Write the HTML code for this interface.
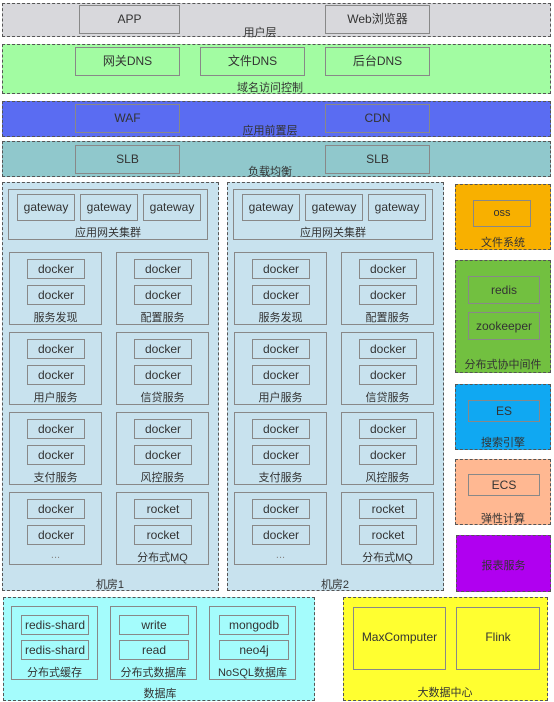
<!DOCTYPE html>
<html><head><meta charset="utf-8"><style>
body{margin:0;width:554px;height:702px;background:#fff;position:relative;overflow:hidden;font-family:"Liberation Sans","Noto Sans CJK SC",sans-serif;color:#333}
div{position:absolute;box-sizing:border-box}
.L{border:1px dashed #555}
.b{border:1px solid #888;text-align:center;font-size:12px}
.t{font-size:11px;text-align:center;white-space:nowrap}
</style></head><body>
<!-- user layer -->
<div class="L" style="left:2px;top:3px;width:549px;height:34px;background:#d8d8dc"></div>
<div class="b" style="left:79px;top:5px;width:101px;height:29px;line-height:27px">APP</div>
<div class="b" style="left:325px;top:5px;width:105px;height:29px;line-height:27px">Web浏览器</div>
<div class="t" style="left:230px;top:24px;width:60px">用户层</div>
<!-- DNS -->
<div class="L" style="left:2px;top:44px;width:549px;height:50px;background:#a2fca2"></div>
<div class="b" style="left:75px;top:47px;width:105px;height:29px;line-height:27px">网关DNS</div>
<div class="b" style="left:200px;top:47px;width:105px;height:29px;line-height:27px">文件DNS</div>
<div class="b" style="left:325px;top:47px;width:105px;height:29px;line-height:27px">后台DNS</div>
<div class="t" style="left:220px;top:79px;width:100px">域名访问控制</div>
<!-- front -->
<div class="L" style="left:2px;top:101px;width:549px;height:36px;background:#5a6cf2"></div>
<div class="b" style="left:75px;top:104px;width:105px;height:29px;line-height:27px">WAF</div>
<div class="b" style="left:325px;top:104px;width:105px;height:29px;line-height:27px">CDN</div>
<div class="t" style="left:220px;top:122px;width:100px">应用前置层</div>
<!-- SLB -->
<div class="L" style="left:2px;top:141px;width:549px;height:36px;background:#90c8cc"></div>
<div class="b" style="left:75px;top:145px;width:105px;height:29px;line-height:27px">SLB</div>
<div class="b" style="left:325px;top:145px;width:105px;height:29px;line-height:27px">SLB</div>
<div class="t" style="left:220px;top:163px;width:100px">负载均衡</div>

<!-- room 1 -->
<div class="L" style="left:2px;top:182px;width:217px;height:409px;background:#c8e2ee"></div>
<div class="b" style="left:8px;top:189px;width:200px;height:51px"></div>
<div class="b" style="left:17px;top:194px;width:58px;height:27px;line-height:25px">gateway</div>
<div class="b" style="left:80px;top:194px;width:58px;height:27px;line-height:25px">gateway</div>
<div class="b" style="left:143px;top:194px;width:58px;height:27px;line-height:25px">gateway</div>
<div class="t" style="left:58px;top:224px;width:100px">应用网关集群</div>

<!-- room 2 -->
<div class="L" style="left:227px;top:182px;width:217px;height:409px;background:#c8e2ee"></div>
<div class="b" style="left:233px;top:189px;width:200px;height:51px"></div>
<div class="b" style="left:242px;top:194px;width:58px;height:27px;line-height:25px">gateway</div>
<div class="b" style="left:305px;top:194px;width:58px;height:27px;line-height:25px">gateway</div>
<div class="b" style="left:368px;top:194px;width:58px;height:27px;line-height:25px">gateway</div>
<div class="t" style="left:283px;top:224px;width:100px">应用网关集群</div>

<div id="groups"></div>
<script>
var rows=[252,332,412,492];
var names=[["服务发现","配置服务"],["用户服务","信贷服务"],["支付服务","风控服务"],["...","分布式MQ"]];
var h="";
[0,225].forEach(function(o){
 rows.forEach(function(y,r){
  [[9,0],[116,1]].forEach(function(c){
   var x=c[0]+o, n=names[r][c[1]], it=(r==3&&c[1]==1)?"rocket":"docker";
   h+='<div class="b" style="left:'+x+'px;top:'+y+'px;width:93px;height:73px"></div>';
   h+='<div class="b" style="left:'+(x+18)+'px;top:'+(y+7)+'px;width:58px;height:20px;line-height:18px">'+it+'</div>';
   h+='<div class="b" style="left:'+(x+18)+'px;top:'+(y+33)+'px;width:58px;height:20px;line-height:18px">'+it+'</div>';
   h+='<div class="t" style="left:'+x+'px;top:'+(y+57)+'px;width:93px;'+(n=="..."?"color:#888":"")+'">'+n+'</div>';
  });
 });
});
document.getElementById("groups").outerHTML=h;
</script>
<div class="t" style="left:60px;top:576px;width:100px">机房1</div>
<div class="t" style="left:285px;top:576px;width:100px">机房2</div>

<!-- right column -->
<div class="L" style="left:455px;top:184px;width:96px;height:66px;background:#f8b000"></div>
<div class="b" style="left:473px;top:200px;width:58px;height:27px;line-height:25px;font-size:11px">oss</div>
<div class="t" style="left:455px;top:234px;width:96px">文件系统</div>

<div class="L" style="left:455px;top:260px;width:96px;height:113px;background:#72c040"></div>
<div class="b" style="left:468px;top:276px;width:72px;height:28px;line-height:26px">redis</div>
<div class="b" style="left:468px;top:312px;width:72px;height:28px;line-height:26px">zookeeper</div>
<div class="t" style="left:455px;top:356px;width:96px">分布式协中间件</div>

<div class="L" style="left:455px;top:384px;width:96px;height:66px;background:#10a8f2"></div>
<div class="b" style="left:468px;top:400px;width:72px;height:22px;line-height:20px">ES</div>
<div class="t" style="left:455px;top:434px;width:96px">搜索引擎</div>

<div class="L" style="left:455px;top:459px;width:96px;height:66px;background:#ffb892"></div>
<div class="b" style="left:468px;top:474px;width:72px;height:22px;line-height:20px">ECS</div>
<div class="t" style="left:455px;top:510px;width:96px">弹性计算</div>

<div class="L" style="left:456px;top:535px;width:95px;height:57px;background:#b000f0"></div>
<div class="t" style="left:456px;top:557px;width:95px">报表服务</div>

<!-- database -->
<div class="L" style="left:3px;top:597px;width:312px;height:104px;background:#a4fcfc"></div>
<div class="b" style="left:11px;top:606px;width:87px;height:74px"></div>
<div class="b" style="left:21px;top:615px;width:68px;height:20px;line-height:18px">redis-shard</div>
<div class="b" style="left:21px;top:640px;width:68px;height:20px;line-height:18px">redis-shard</div>
<div class="t" style="left:11px;top:664px;width:87px">分布式缓存</div>
<div class="b" style="left:110px;top:606px;width:87px;height:74px"></div>
<div class="b" style="left:119px;top:615px;width:70px;height:20px;line-height:18px">write</div>
<div class="b" style="left:119px;top:640px;width:70px;height:20px;line-height:18px">read</div>
<div class="t" style="left:110px;top:664px;width:87px">分布式数据库</div>
<div class="b" style="left:209px;top:606px;width:87px;height:74px"></div>
<div class="b" style="left:219px;top:615px;width:70px;height:20px;line-height:18px">mongodb</div>
<div class="b" style="left:219px;top:640px;width:70px;height:20px;line-height:18px">neo4j</div>
<div class="t" style="left:209px;top:664px;width:87px">NoSQL数据库</div>
<div class="t" style="left:110px;top:685px;width:100px">数据库</div>

<!-- big data -->
<div class="L" style="left:343px;top:597px;width:205px;height:104px;background:#ffff30"></div>
<div class="b" style="left:353px;top:607px;width:93px;height:63px;line-height:58px">MaxComputer</div>
<div class="b" style="left:456px;top:607px;width:84px;height:63px;line-height:58px">Flink</div>
<div class="t" style="left:395px;top:684px;width:100px">大数据中心</div>
</body></html>
